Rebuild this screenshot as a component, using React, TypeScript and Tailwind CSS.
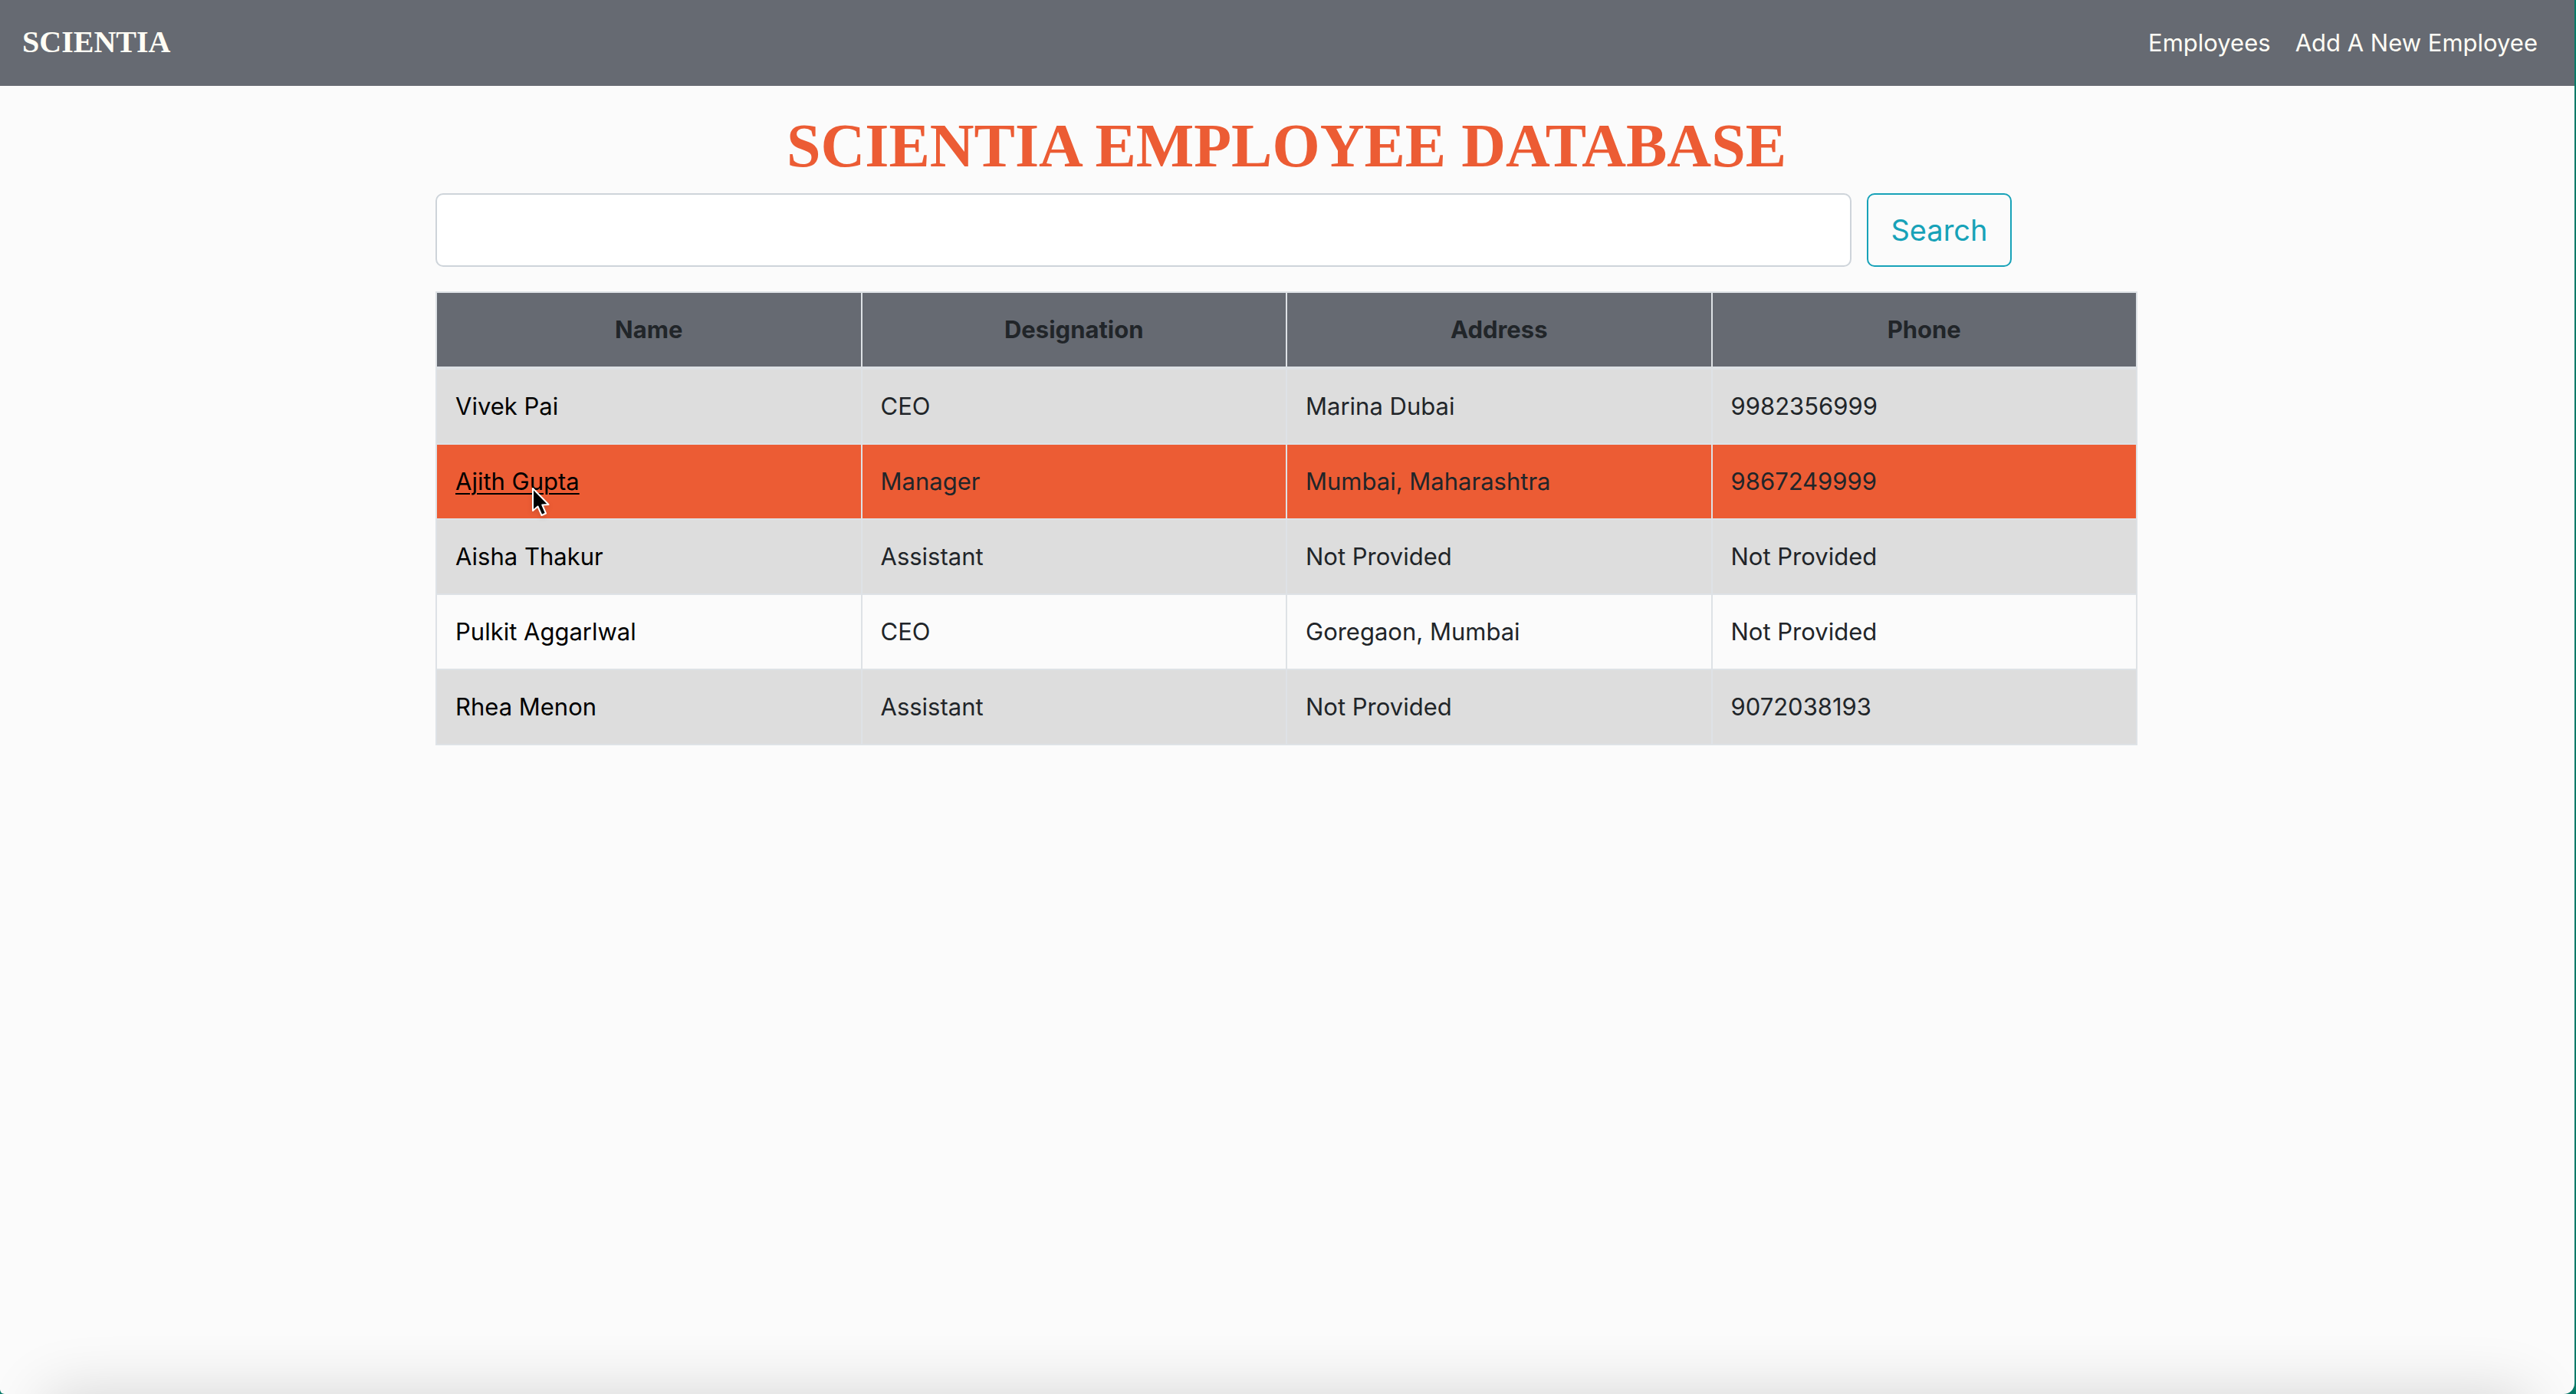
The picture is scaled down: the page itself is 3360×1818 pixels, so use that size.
type Employee = { name: string; designation: string; address: string; phone: string };

const columns = ["Name", "Designation", "Address", "Phone"];

const employees: Employee[] = [
  { name: "Vivek Pai", designation: "CEO", address: "Marina Dubai", phone: "9982356999" },
  { name: "Ajith Gupta", designation: "Manager", address: "Mumbai, Maharashtra", phone: "9867249999" },
  { name: "Aisha Thakur", designation: "Assistant", address: "Not Provided", phone: "Not Provided" },
  { name: "Pulkit Aggarlwal", designation: "CEO", address: "Goregaon, Mumbai", phone: "Not Provided" },
  { name: "Rhea Menon", designation: "Assistant", address: "Not Provided", phone: "9072038193" },
];

const activeRow = 1;

function Pointer() {
  return (
    <svg
      className="absolute left-[99px] top-[26px] w-[28px] h-[42px] drop-shadow-md"
      viewBox="0 0 28 42"
      aria-hidden="true"
    >
      <path
        d="M2 2 L2 31 L8.5 25.5 L13.5 37 L19 34.5 L14.3 23.5 L22.5 23 Z"
        fill="#000"
        stroke="#fff"
        strokeWidth="2"
        strokeLinejoin="round"
      />
    </svg>
  );
}

export default function App() {
  return (
    <div className="bg-[#087a68] pr-[2px]">
      <div className="relative min-h-screen overflow-hidden rounded-br-[14px] rounded-bl-[6px] bg-[#fbfbfb] font-['Inter',sans-serif] text-[31px] leading-[48px] text-[#212529]">
        <nav className="flex h-[112px] items-center justify-between bg-[#666a72] pl-[29px] pr-[48px] text-[#fffdf5]">
          <a href="#" className="pb-[2px] font-['Liberation_Serif',serif] text-[40px] font-bold">
            SCIENTIA
          </a>
          <div className="flex gap-8">
            <a href="#employees">Employees</a>
            <a href="#new">Add A New Employee</a>
          </div>
        </nav>

        <div className="pr-[2px]">
          <main className="mx-auto max-w-[2220px]">
            <h1 className="pt-[30px] text-center font-['Liberation_Serif',serif] text-[80px] font-bold leading-[96px] text-[#ec5c34]">
              SCIENTIA EMPLOYEE DATABASE
            </h1>

            <form className="mt-[14px] mr-[164px] flex gap-5" onSubmit={(e) => e.preventDefault()}>
              <input
                type="search"
                aria-label="Search employees"
                className="h-24 min-w-0 flex-1 rounded-[10px] border-2 border-[#ced4da] bg-white px-8 text-[40px] outline-none"
              />
              <button
                type="submit"
                className="h-24 w-[189px] rounded-[10px] border-2 border-[#17a2b8] text-[38px] text-[#17a2b8]"
              >
                Search
              </button>
            </form>

            <table className="mt-8 w-full table-fixed border-collapse">
              <thead>
                <tr className="bg-[#666a72]">
                  {columns.map((c) => (
                    <th key={c} className="border-2 border-b-4 border-[#dee2e6] p-6 text-center font-bold">
                      {c}
                    </th>
                  ))}
                </tr>
              </thead>
              <tbody>
                {employees.map((e, i) => (
                  <tr
                    key={e.name}
                    className={i === activeRow ? "bg-[#ec5c34]" : i % 2 === 0 ? "bg-[#dddddd]" : ""}
                  >
                    <td className="border-2 border-[#dee2e6] p-6">
                      <a
                        href="#employee"
                        className={
                          i === activeRow
                            ? "relative text-black underline decoration-2 underline-offset-4"
                            : "text-black"
                        }
                      >
                        {e.name}
                        {i === activeRow && <Pointer />}
                      </a>
                    </td>
                    <td className="border-2 border-[#dee2e6] p-6">{e.designation}</td>
                    <td className="border-2 border-[#dee2e6] p-6">{e.address}</td>
                    <td className="border-2 border-[#dee2e6] p-6">{e.phone}</td>
                  </tr>
                ))}
              </tbody>
            </table>
          </main>
        </div>

        <div className="absolute -bottom-[70px] left-[70px] right-[70px] h-[60px] shadow-[0_0_80px_10px_rgba(0,0,0,0.16)]" />
      </div>
    </div>
  );
}
